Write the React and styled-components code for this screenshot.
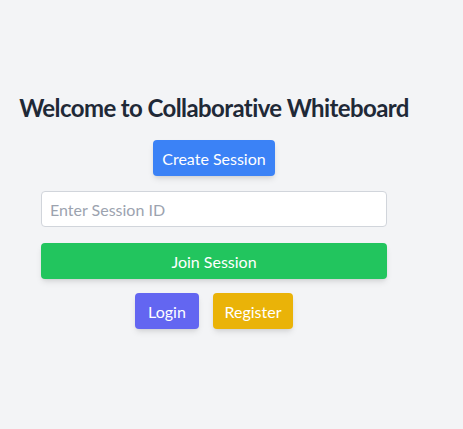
import React from "react";
import styled, { createGlobalStyle } from "styled-components";

const Global = createGlobalStyle`
  * { box-sizing: border-box; }
  html, body { margin: 0; padding: 0; background: #f3f4f6; }
  body { font-family: Lato, "Open Sans", sans-serif; }
`;

const Page = styled.div`
  width: 428px;
  min-height: 421px;
  display: flex;
  align-items: center;
  justify-content: center;
`;

const Panel = styled.div`
  display: flex;
  flex-direction: column;
  align-items: center;
  width: 100%;
`;

const Title = styled.h1`
  margin: 0 0 16px;
  font-size: 24px;
  line-height: 32px;
  font-weight: 700;
  letter-spacing: -0.6px;
  color: #1f2937;
  white-space: nowrap;
`;

const Button = styled.button`
  height: 36px;
  padding: 0;
  border: none;
  border-radius: 4px;
  background: ${(p) => p.$bg};
  color: #fff;
  font-family: inherit;
  font-size: 16px;
  white-space: nowrap;
  box-shadow: 0 4px 6px -1px rgba(0,0,0,0.1), 0 2px 4px -2px rgba(0,0,0,0.1);
  width: ${(p) => p.$w || "auto"};
  cursor: pointer;
`;

const Form = styled.div`
  width: 346px;
  display: flex;
  flex-direction: column;
  gap: 16px;
  margin-top: 15px;
`;

const Input = styled.input`
  height: 36px;
  width: 100%;
  border: 1px solid #d1d5db;
  border-radius: 4px;
  padding: 0 8px;
  font-family: inherit;
  font-size: 16px;
  color: #1f2937;
  background: #fff;
  &::placeholder { color: #9ca3af; }
`;

const Row = styled.div`
  display: flex;
  gap: 14px;
  margin-top: 14px;
`;

export default function App() {
  return (
    <>
      <Global />
      <Page>
        <Panel>
          <Title>Welcome to Collaborative Whiteboard</Title>
          <Button $bg="#3b82f6" $w="122px">Create Session</Button>
          <Form>
            <Input placeholder="Enter Session ID" />
            <Button $bg="#22c55e" $w="100%">Join Session</Button>
          </Form>
          <Row>
            <Button $bg="#6366f1" $w="64px">Login</Button>
            <Button $bg="#eab308" $w="80px">Register</Button>
          </Row>
        </Panel>
      </Page>
    </>
  );
}
